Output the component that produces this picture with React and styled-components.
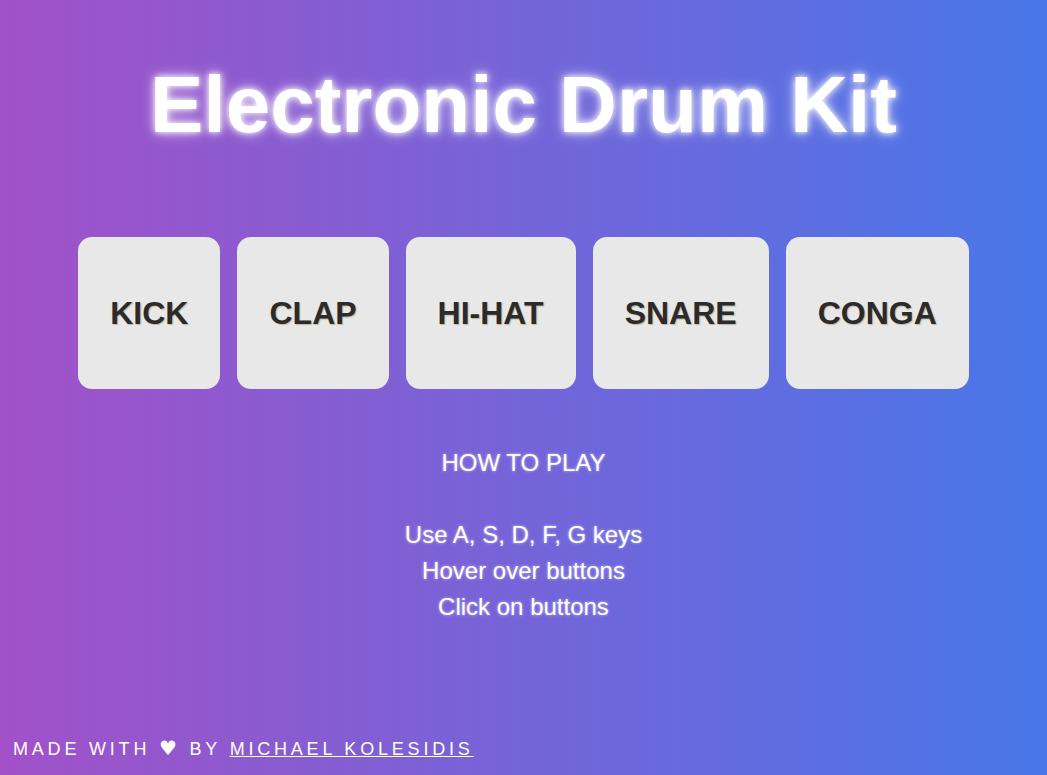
import React from 'react'
import styled, { createGlobalStyle } from 'styled-components'

const GlobalStyle = createGlobalStyle`
    html, body {
        margin: 0;
        padding: 0;
        height: 100%;
    }
    body {
        font-family: "Liberation Sans", Arial, sans-serif;
        background: linear-gradient(to right, #a251c8, #4877e9);
        color: #fff;
    }
`

const Page = styled.main`
    min-height: 775px;
    display: flex;
    flex-direction: column;
    align-items: center;
    box-sizing: border-box;
`

const Title = styled.h1`
    margin: 57px 0 0;
    font-size: 80px;
    font-weight: 700;
    line-height: 96px;
    color: #fff;
    text-shadow: 0 0 6px #fff, 0 0 14px rgba(255, 255, 255, 0.7);
`

const Pads = styled.div`
    display: flex;
    gap: 17px;
    margin-top: 84px;
`

const Pad = styled.button`
    height: 152px;
    padding: 0 32px;
    border: none;
    border-radius: 14px;
    background: #e8e8e8;
    color: #2b2b2b;
    font-family: "Liberation Sans", Arial, sans-serif;
    font-size: 32px;
    font-weight: 700;
    text-shadow: 1px 1px 1px rgba(120, 90, 40, 0.35);
    cursor: pointer;
`

const HowTo = styled.div`
    margin-top: 56px;
    text-align: center;
    font-size: 24px;
    line-height: 36px;
    text-shadow: 0 0 3px rgba(255, 255, 255, 0.6);
`

const Gap = styled.div`
    height: 36px;
`

const Footer = styled.footer`
    align-self: flex-start;
    margin-top: auto;
    padding: 0 0 15px 13px;
    font-size: 18px;
    letter-spacing: 3.8px;
    text-transform: uppercase;

    a {
        color: #fff;
        text-decoration: underline;
    }
`

const Heart = styled.span`
    font-family: "DejaVu Sans", sans-serif;
    font-size: 20px;
    line-height: 1;
`

const pads = ['KICK', 'CLAP', 'HI-HAT', 'SNARE', 'CONGA']

const App = () => (
    <>
        <GlobalStyle />
        <Page>
            <Title>Electronic Drum Kit</Title>
            <Pads>
                {pads.map(name => (
                    <Pad key={name}>{name}</Pad>
                ))}
            </Pads>
            <HowTo>
                <div>HOW TO PLAY</div>
                <Gap />
                <div>Use A, S, D, F, G keys</div>
                <div>Hover over buttons</div>
                <div>Click on buttons</div>
            </HowTo>
            <Footer>
                Made with <Heart>♥</Heart> by <a href="#">Michael Kolesidis</a>
            </Footer>
        </Page>
    </>
)

export default App
